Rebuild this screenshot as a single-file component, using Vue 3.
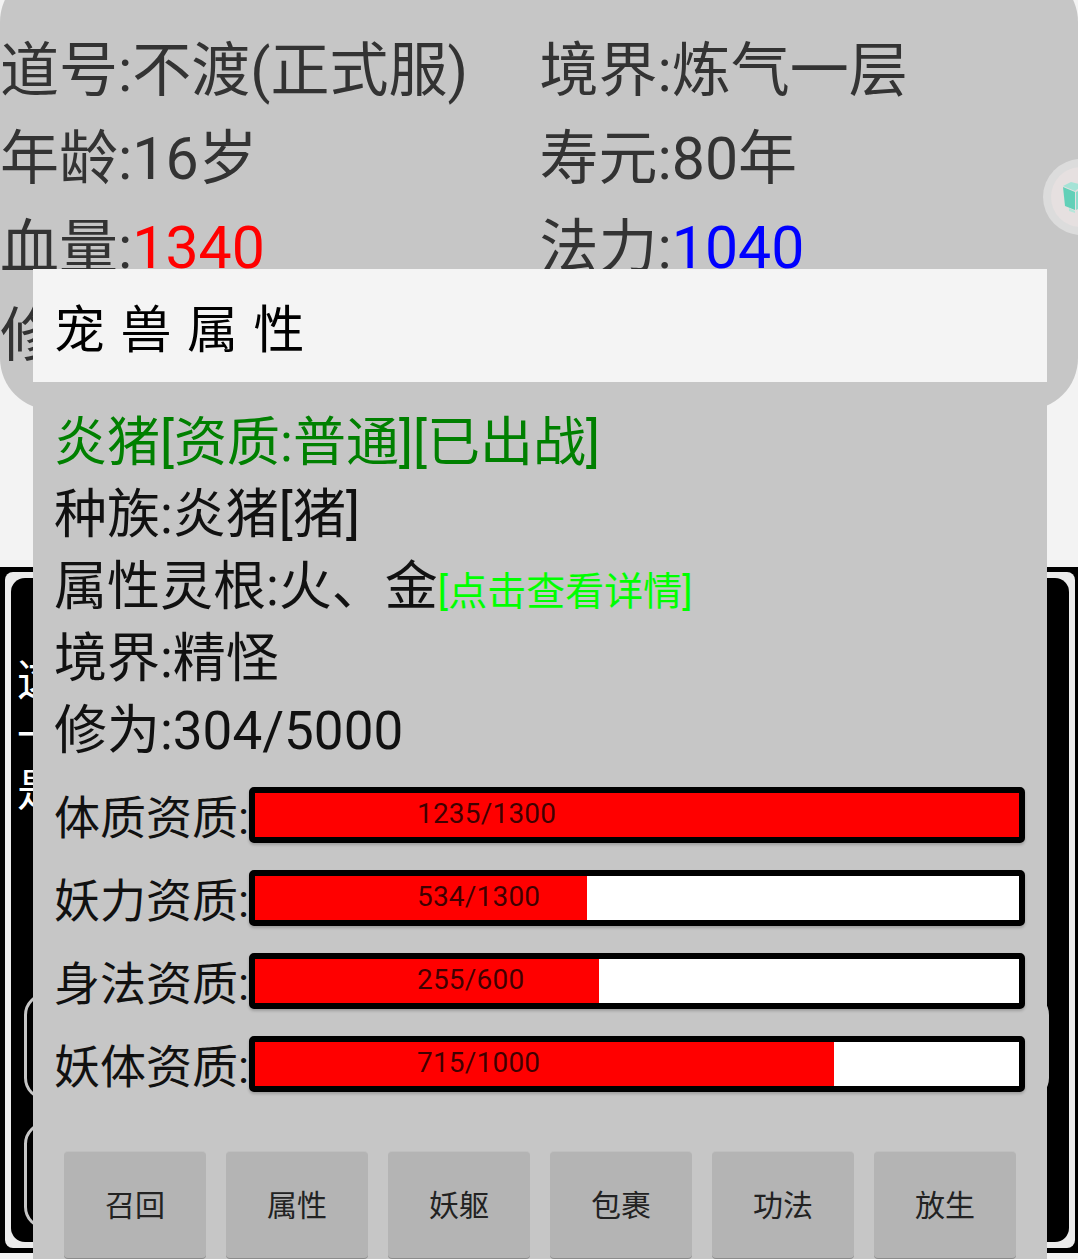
<script setup>
const baseRows = [
  { left: '道号:', leftValue: '不渡(正式服)', right: '境界:', rightValue: '炼气一层' },
  { left: '年龄:', leftValue: '16岁', right: '寿元:', rightValue: '80年' },
  { left: '血量:', leftValue: '1340', leftClass: 'red', right: '法力:', rightValue: '1040', rightClass: 'blue' },
  { left: '修为:', leftValue: '0/100', right: '灵石:', rightValue: '0' }
]

// 条的宽度和数值不完全成比例，按截图取值
const bars = [
  { label: '体质资质:', text: '1235/1300', width: 100 },
  { label: '妖力资质:', text: '534/1300', width: 43.4 },
  { label: '身法资质:', text: '255/600', width: 45 },
  { label: '妖体资质:', text: '715/1000', width: 75.8 }
]

const buttons = ['召回', '属性', '妖躯', '包裹', '功法', '放生']
</script>

<template>
  <div class="page">
    <div class="info-card">
      <div v-for="row in baseRows" :key="row.left" class="info-row">
        <div class="info-cell">{{ row.left }}<span :class="row.leftClass">{{ row.leftValue }}</span></div>
        <div class="info-cell">{{ row.right }}<span :class="row.rightClass">{{ row.rightValue }}</span></div>
      </div>
    </div>

    <div class="dark-panel">
      <div class="dark-frame">
        <div class="dark-inner">
          <div class="dark-text">
            <p>这</p>
            <p>一</p>
            <p>是</p>
          </div>
          <div class="dark-item wide"></div>
          <div class="dark-item"></div>
        </div>
      </div>
    </div>

    <div class="float-ball">
      <div class="float-ball-inner">
        <svg width="36" height="34" viewBox="0 0 36 34">
          <path d="M0 6 L8 2 L20 5 L12 11 Z" fill="#a5e3d6" />
          <path d="M0 7 L12 12 L12 30 L2 26 Z" fill="#62d0b8" />
          <path d="M13 12 L24 6 L24 24 L13 30 Z" fill="#8adccb" />
          <path d="M6 28 L12 31 L12 33 L6 31 Z" fill="#b5e6da" />
        </svg>
      </div>
    </div>

    <div class="modal">
      <div class="modal-title">宠兽属性</div>
      <div class="modal-body">
        <div class="line green">炎猪[资质:普通][已出战]</div>
        <div class="line">种族:炎猪[猪]</div>
        <div class="line">属性灵根:火、金<span class="detail">[点击查看详情]</span></div>
        <div class="line">境界:精怪</div>
        <div class="line">修为:304/5000</div>

        <div class="bars">
          <div v-for="bar in bars" :key="bar.label" class="bar-row">
            <span class="bar-label">{{ bar.label }}</span>
            <div class="bar">
              <div class="bar-fill" :style="{ width: bar.width + '%' }"></div>
              <span class="bar-text">{{ bar.text }}</span>
            </div>
          </div>
        </div>

        <div class="actions">
          <div v-for="name in buttons" :key="name" class="action-btn">{{ name }}</div>
        </div>
      </div>
    </div>
  </div>
</template>

<style>
html, body {
  margin: 0;
  background: #f3f3f3;
}
</style>

<style scoped>
.page {
  position: relative;
  height: 1259px;
  overflow: hidden;
  background: #f3f3f3;
  font-family: Roboto, "Noto Sans CJK SC", sans-serif;
}

.info-card {
  margin-top: -30px;
  height: 440px;
  box-sizing: border-box;
  padding-top: 51px;
  background: #c6c6c6;
  border-radius: 52px;
}

.info-row {
  display: flex;
  height: 88.5px;
  align-items: center;
  font-size: 59px;
  color: #333;
}

.info-cell {
  width: 542px;
  white-space: nowrap;
}

.info-cell + .info-cell {
  padding-left: 1px;
}

.red { color: #f00; }
.blue { color: #00f; }

.dark-panel {
  margin-top: 157px;
  height: 686px;
  box-sizing: border-box;
  padding: 5px 3px 5px 5px;
  background: #000;
}

.dark-frame {
  height: 100%;
  box-sizing: border-box;
  padding: 6px;
  border-radius: 8px;
  background: #ececec;
}

.dark-inner {
  height: 100%;
  border-radius: 14px;
  background: #000;
  overflow: hidden;
}

.dark-text {
  padding: 76px 0 0 6px;
  height: 415px;
  box-sizing: border-box;
  color: #fff;
  font-size: 44px;
  line-height: 55px;
}

.dark-text p {
  margin: 0;
}

.dark-item {
  margin-left: 13px;
  height: 107px;
  width: 1000px;
  box-sizing: border-box;
  border: 3px solid #c6c6c6;
  border-radius: 22px;
}

.dark-item.wide {
  width: 1025px;
  margin-bottom: 22px;
}

.float-ball {
  position: absolute;
  left: 1043px;
  top: 159px;
  width: 76px;
  height: 76px;
  display: flex;
  align-items: center;
  justify-content: center;
  border-radius: 50%;
  background: #dcdcdc;
}

.float-ball-inner {
  width: 60px;
  height: 60px;
  display: flex;
  align-items: center;
  justify-content: center;
  border-radius: 50%;
  background: #e6e0e0;
}

.modal {
  position: absolute;
  left: 33px;
  top: 269px;
  width: 1014px;
  height: 1000px;
  background: #c6c6c6;
}

.modal-title {
  height: 113px;
  box-sizing: border-box;
  padding-left: 21px;
  display: flex;
  align-items: center;
  background: #f4f4f4;
  color: #000;
  font-size: 51px;
  letter-spacing: 15.5px;
}

.modal-body {
  padding: 25px 22px 0 21px;
}

.line {
  height: 72px;
  line-height: 72px;
  font-size: 53px;
  color: #111;
  white-space: nowrap;
}

.line.green {
  color: #008000;
}

.detail {
  font-size: 39px;
  color: #0f0;
}

.bars {
  margin-top: 20px;
  display: flex;
  flex-direction: column;
  gap: 27px;
}

.bar-row {
  display: flex;
  align-items: center;
  height: 56px;
}

.bar-label {
  width: 195px;
  padding-bottom: 2px;
  font-size: 46px;
  color: #111;
  white-space: nowrap;
}

.bar {
  position: relative;
  width: 777px;
  height: 56px;
  box-sizing: border-box;
  border: 6px solid #000;
  border-radius: 5px;
  background: #fff;
  box-shadow: 0 2px 3px rgba(0, 0, 0, 0.2);
}

.bar-fill {
  height: 100%;
  background: #f00;
}

.bar-text {
  position: absolute;
  left: 162px;
  top: 0;
  line-height: 42px;
  font-size: 28px;
  color: rgba(0, 0, 0, 0.75);
  letter-spacing: 0.2px;
}

.actions {
  margin-top: 60px;
  margin-left: 10px;
  display: flex;
  gap: 20px;
}

.action-btn {
  width: 142px;
  height: 106px;
  box-sizing: border-box;
  padding-bottom: 4px;
  display: flex;
  align-items: center;
  justify-content: center;
  border-radius: 4px;
  background: #b4b4b4;
  color: #222;
  font-size: 30px;
  box-shadow: 0 -1px 0 #bfbfbf, 0 1px 0 #8c8c8c;
}
</style>
